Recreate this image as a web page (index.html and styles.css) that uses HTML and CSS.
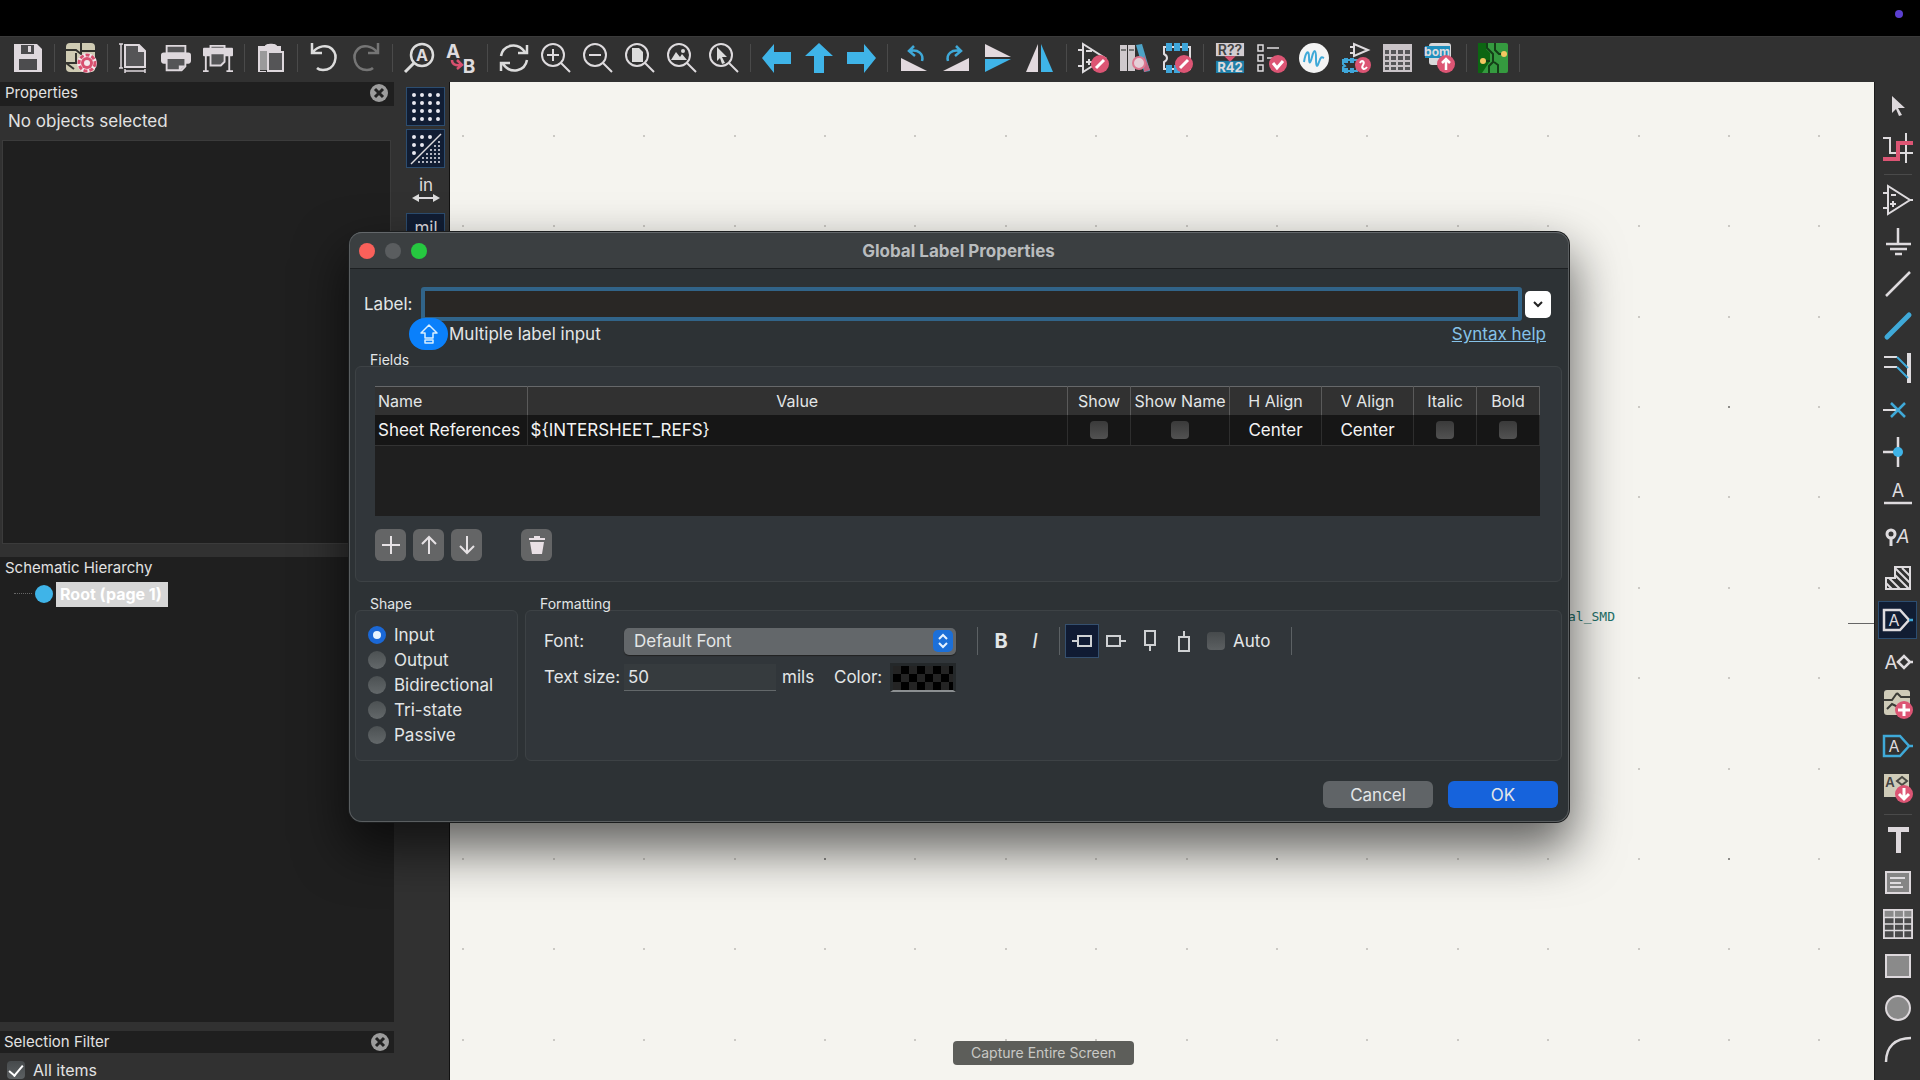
FILE: index.html
```html
<!DOCTYPE html>
<html lang="en">
<head>
    <meta charset="UTF-8">
    <meta name="viewport" content="width=device-width, initial-scale=1.0">
    <title>Global Label Properties</title>
    <link rel="stylesheet" href="styles.css">
</head>
<body>

<div class="menubar"><span class="mic-dot"></span></div>

<div class="toolbar">
    <button type="button" title="Save"><svg viewBox="0 0 30 30"><path fill="#ded8dd" d="M1 1h23l5 5v23H1z"/><path fill="#4c4c4e" d="M8 2h13v9H8zM6 16h18v11H6z"/><path fill="#ded8dd" d="M15 3h3v6h-3z"/></svg></button>
    <span class="sep"></span>
    <button type="button" title="Schematic Setup"><svg viewBox="0 0 30 30"><rect width="29" height="29" rx="4" fill="#cfcbb3"/><path d="M0 7h10l5 4V0M15 8h14M0 20h10V10M0 20l8 6" fill="none" stroke="#34342f" stroke-width="2"/><circle cx="21" cy="20" r="10" fill="#f3e8ec"/><circle cx="21" cy="20" r="8" fill="none" stroke="#d8506f" stroke-width="3" stroke-dasharray="4 2"/><circle cx="21" cy="20" r="6" fill="#d8506f"/><circle cx="21" cy="20" r="3" fill="#f3e8ec"/></svg></button>
    <span class="sep"></span>
    <button type="button" title="Page Settings"><svg viewBox="0 0 30 30"><path fill="#555557" stroke="#ded8dd" stroke-width="2" d="M6 2h14l6 6v16H6z"/><path fill="#ded8dd" d="M19 1l8 8h-8z"/><path stroke="#ded8dd" stroke-width="1.5" fill="none" d="M0 1h4M2 1v24M0 25h4M6 28h20M6 26v4M26 26v4"/></svg></button>
    <button type="button" title="Print"><svg viewBox="0 0 32 30"><path fill="#555557" stroke="#ded8dd" stroke-width="2" d="M6 2h20v8H6z"/><rect y="9" width="32" height="12" rx="3" fill="#ded8dd"/><path fill="#555557" stroke="#ded8dd" stroke-width="2" d="M6 15h20v9l-4 4H6z"/><path fill="#ded8dd" d="M19 29v-6h7z"/></svg></button>
    <button type="button" title="Plot"><svg viewBox="0 0 32 30"><path fill="#555557" stroke="#ded8dd" stroke-width="2" d="M8 2h15v5H8z"/><rect y="4" width="32" height="9" rx="1" fill="#ded8dd"/><path fill="#555557" stroke="#ded8dd" stroke-width="2" d="M8 10h15v9l-4 4H8z"/><path fill="none" stroke="#ded8dd" stroke-width="2" d="M3 12v16M28 12v16M0 29h6M25 29h7"/></svg></button>
    <span class="sep"></span>
    <button type="button" title="Paste"><svg viewBox="0 0 30 30"><path fill="#9a9a9b" d="M4 4h21v23H4z"/><path fill="#ded8dd" d="M2 3h7c0-3 12-3 12 0h4v5H2zM2 8h2v20h6v1H2z"/><path fill="#555557" stroke="#ded8dd" stroke-width="2" d="M12 9h15v19H12z"/></svg></button>
    <span class="sep"></span>
    <button type="button" title="Undo"><svg viewBox="0 0 30 30"><path fill="none" stroke="#dcdcdc" stroke-width="2.5" d="M4 9C9 3 18 1 23 6c7 7 3 21-9 21-2 0-4 0-6-2M3 0v10h10"/></svg></button>
    <button type="button" title="Redo"><svg viewBox="0 0 30 30"><path fill="none" stroke="#757575" stroke-width="2.5" d="M26 9C21 3 12 1 7 6c-7 7-3 21 9 21 2 0 4 0 6-2M27 0v10H17"/></svg></button>
    <span class="sep"></span>
    <button type="button" title="Find"><svg viewBox="0 0 30 30"><circle cx="18" cy="12" r="11" fill="none" stroke="#dcdcdc" stroke-width="2.5"/><path stroke="#dcdcdc" stroke-width="3" d="M10 20l-9 9"/><text x="18" y="18" class="glyph bold" font-size="16">A</text></svg></button>
    <button type="button" title="Find and Replace"><svg viewBox="0 0 30 30"><text x="7" y="15" class="glyph bold" font-size="19">A</text><text x="23" y="30" class="glyph bold" font-size="19">B</text><path fill="none" stroke="#d8506f" stroke-width="2.5" d="M6 17c0 4 3 6 9 5M11 17l5 5-5 4"/></svg></button>
    <span class="sep"></span>
    <button type="button" title="Refresh"><svg viewBox="0 0 30 30"><path fill="none" stroke="#dcdcdc" stroke-width="2.5" d="M2 13C4 2 18-2 26 9M28 2v8h-9M28 17C26 28 12 32 4 21M2 28v-8h9"/></svg></button>
    <button type="button" title="Zoom In"><svg viewBox="0 0 30 30"><circle cx="12" cy="12" r="11" class="lens"/><path class="lens" d="M20 20l9 9M12 6v12M6 12h12"/></svg></button>
    <button type="button" title="Zoom Out"><svg viewBox="0 0 30 30"><circle cx="12" cy="12" r="11" class="lens"/><path class="lens" d="M20 20l9 9M6 12h12"/></svg></button>
    <button type="button" title="Zoom to Fit"><svg viewBox="0 0 30 30"><circle cx="12" cy="12" r="11" class="lens"/><path class="lens" d="M20 20l9 9"/><path fill="#dcdcdc" d="M7 5h7l4 4v10H7z"/></svg></button>
    <button type="button" title="Zoom to Objects"><svg viewBox="0 0 30 30"><circle cx="12" cy="12" r="11" class="lens"/><path class="lens" d="M20 20l9 9"/><path fill="#dcdcdc" d="M4 17l5-8 4 5 2-3 5 6z"/><circle cx="16" cy="8" r="2" fill="#dcdcdc"/></svg></button>
    <button type="button" title="Zoom to Selection"><svg viewBox="0 0 30 30"><circle cx="12" cy="12" r="11" class="lens"/><path class="lens" d="M20 20l9 9"/><path fill="#dcdcdc" d="M8 4l10 10h-5l3 6-3 1-2-6-3 3z"/></svg></button>
    <span class="sep"></span>
    <button type="button" title="Back"><svg viewBox="0 0 30 30"><path fill="#3fb4e8" d="M0 15L12 1v8h17v12H12v9z"/></svg></button>
    <button type="button" title="Up"><svg viewBox="0 0 30 30"><path fill="#3fb4e8" d="M15 0l14 13h-9v17H10V13H1z"/></svg></button>
    <button type="button" title="Forward"><svg viewBox="0 0 30 30"><path fill="#3fb4e8" d="M30 15L18 1v8H1v12h17v9z"/></svg></button>
    <span class="sep"></span>
    <button type="button" title="Rotate Left"><svg viewBox="0 0 30 30"><path fill="#e2d9de" d="M2 15v13h26z"/><path class="cyan" stroke-width="2.5" d="M23 18c2-7-4-12-12-10M15 3l-5 5 6 5"/></svg></button>
    <button type="button" title="Rotate Right"><svg viewBox="0 0 30 30"><path fill="#e2d9de" d="M28 15v13H2z"/><path class="cyan" stroke-width="2.5" d="M7 18C5 11 11 6 19 8M15 3l5 5-6 5"/></svg></button>
    <button type="button" title="Mirror Vertically"><svg viewBox="0 0 30 30"><path fill="#e2d9de" d="M2 1v13h26z"/><path fill="#3fb4e8" d="M2 29V16h26z"/></svg></button>
    <button type="button" title="Mirror Horizontally"><svg viewBox="0 0 30 30"><path fill="#e2d9de" d="M1 29h12V1z"/><path fill="#3fb4e8" d="M28 29H16V1z"/></svg></button>
    <span class="sep"></span>
    <button type="button" title="Symbol Editor"><svg viewBox="0 0 30 30"><path class="line" d="M5 1v28l22-14zM0 7h5M0 23h5M8 8h6M11 16v6M8 19h6"/><circle cx="22" cy="21" r="9" fill="#dc5574"/><path stroke="#fff" stroke-width="3" d="M18 25l8-8"/></svg></button>
    <button type="button" title="Symbol Library Browser"><svg viewBox="0 0 30 30"><path fill="#cfc9cd" d="M0 2h7v26H0zM8 2h7v26H8z"/><path fill="#777" d="M1 6h5v2H1zM9 6h5v2H9z"/><path fill="#4da3c7" d="M16 2l6-1 8 27-6 1z"/><path fill="#c86483" d="M24 12l6 15-6 2z"/><circle cx="19" cy="20" r="6" fill="#e6cfd8" stroke="#dc7890" stroke-width="2"/></svg></button>
    <button type="button" title="Footprint Editor"><svg viewBox="0 0 30 30"><path class="line" d="M2 4h26v22H2v-7c4-2 4-6 0-8z"/><path fill="#3fa6da" d="M4 0h6v8H4zM12 0h6v8h-6zM20 0h6v8h-6zM4 22h6v8H4zM12 22h6v8h-6z"/><circle cx="22" cy="21" r="9" fill="#dc5574"/><path stroke="#fff" stroke-width="3" d="M18 25l8-8"/></svg></button>
    <span class="sep"></span>
    <button type="button" title="Annotate"><svg viewBox="0 0 30 32"><path fill="#d2ccd0" d="M0 0h30v14H0z"/><path fill="#1f7fa8" d="M0 19h30v13H0z"/><path fill="#dc5574" d="M9 14h12l-6 6z"/><text x="15" y="13" class="glyph dark" font-size="15">R??</text><text x="15" y="31" class="glyph bold" font-size="14">R42</text></svg></button>
    <button type="button" title="Electrical Rules Checker"><svg viewBox="0 0 30 30"><path class="line" stroke-width="1.5" d="M1 2h5v6H1zM1 12h5v6H1zM1 22h5v6H1zM10 5h12M10 15h6"/><circle cx="21" cy="21" r="9" fill="#dc5574"/><path fill="none" stroke="#fff" stroke-width="3" d="M16 20l4 5 6-7"/></svg></button>
    <button type="button" title="Simulator"><svg viewBox="0 0 30 30"><circle cx="15" cy="15" r="15" fill="#f4f4f4"/><path class="cyan" d="M5 19c2-12 5-12 5-5s1 8 3 0 4-8 4 1 1 10 3 4 3-5 5-4"/></svg></button>
    <button type="button" title="Assign Footprints"><svg viewBox="0 0 30 30"><path class="line" d="M13 1v12l14-6zM9 4h4M9 10h4"/><path class="cyan" d="M2 17h14v11H2v-4l2-1-2-2z"/><path fill="#3fa6da" d="M3 15h4v5H3zM9 15h4v5H9zM3 25h4v5H3zM9 25h4v5H9z"/><circle cx="22" cy="22" r="8" fill="#dc5574"/><path fill="none" stroke="#fff" stroke-width="2" d="M19 20c2-4 5-1 3 2s1 6 4 2"/></svg></button>
    <button type="button" title="Edit Symbol Fields"><svg viewBox="0 0 30 30"><path fill="#c9c3c7" d="M0 1h29v28H0z"/><path fill="#555557" d="M2 7h4v4H2zM8 7h5v4H8zM15 7h5v4h-5zM22 7h5v4h-5zM2 13h4v4H2zM8 13h5v4H8zM15 13h5v4h-5zM22 13h5v4h-5zM2 19h4v3H2zM8 19h5v3H8zM15 19h5v3h-5zM22 19h5v3h-5zM2 24h4v3H2zM8 24h5v3H8zM15 24h5v3h-5zM22 24h5v3h-5z"/></svg></button>
    <button type="button" title="Bill of Materials"><svg viewBox="0 0 30 30"><rect x="4" width="22" height="22" rx="3" fill="#d8d8da"/><path fill="#1f8fbe" d="M0 3h25v12H0z"/><text x="12" y="13" class="glyph bold" font-size="12">bom</text><circle cx="21" cy="21" r="9" fill="#dc5574"/><path fill="none" stroke="#fff" stroke-width="2.5" d="M21 27V16M17 20l4-4 4 4"/></svg></button>
    <span class="sep"></span>
    <button type="button" title="PCB Editor"><svg viewBox="0 0 30 30"><rect width="30" height="30" rx="2" fill="#359a3f"/><path fill="#0c6612" d="M0 0h8v6l4 4v8l-8 12H0z"/><path fill="none" stroke="#143f17" stroke-width="2" d="M9 0v5l6 6v8l-4 4v7M17 0v7l4 4h6M20 30v-8l-4-3M5 18h7"/><circle cx="5" cy="18" r="3" fill="#f5c761"/><circle cx="26" cy="11" r="3" fill="#f5c761"/></svg></button>
    <span class="sep"></span>
</div>

<div class="workspace">
    <aside class="panels">
        <div class="panel-header">Properties
            <button type="button" class="close" title="Close"><svg viewBox="0 0 18 18"><circle cx="9" cy="9" r="9" fill="#9c9c9c"/><path stroke="#222" stroke-width="3" d="M5 5l8 8M13 5l-8 8"/></svg></button>
        </div>
        <p class="status">No objects selected</p>
        <div class="property-grid"></div>
        <div class="panel-header">Schematic Hierarchy</div>
        <div class="tree">
            <span class="branch"></span><span class="node"></span><span class="node-name">Root (page 1)</span>
        </div>
        <div class="panel-header small">Selection Filter
            <button type="button" class="close" title="Close"><svg viewBox="0 0 18 18"><circle cx="9" cy="9" r="9" fill="#9c9c9c"/><path stroke="#222" stroke-width="3" d="M5 5l8 8M13 5l-8 8"/></svg></button>
        </div>
        <label class="filter"><input type="checkbox" class="check" checked>All items</label>
    </aside>

    <div class="left-tools">
        <button type="button" class="active" title="Show Grid"><svg viewBox="0 0 30 30"><path class="dots" d="M3 3h0M11 3h0M19 3h0M27 3h0M3 11h0M11 11h0M19 11h0M27 11h0M3 19h0M11 19h0M19 19h0M27 19h0M3 27h0M11 27h0M19 27h0M27 27h0"/></svg></button>
        <button type="button" class="active" title="Grid Overrides"><svg viewBox="0 0 30 30"><path class="dots" d="M3 3h0M11 3h0M19 3h0M3 11h0M11 11h0M3 19h0"/><path class="line" stroke-width="1.5" d="M0 30L30 0"/><path class="dots fine" d="M28 8h0M24 12h0M28 12h0M20 16h0M24 16h0M28 16h0M16 20h0M20 20h0M24 20h0M28 20h0M12 24h0M16 24h0M20 24h0M24 24h0M28 24h0M8 28h0M12 28h0M16 28h0M20 28h0M24 28h0M28 28h0"/></svg></button>
        <button type="button" title="Inches"><svg viewBox="0 0 30 30"><text x="15" y="15" class="glyph" font-size="17">in</text><path class="line" d="M5 22h20"/><path fill="#dcdcdc" d="M1 22l7-4v8zM29 22l-7-4v8z"/></svg></button>
        <button type="button" class="active" title="Mils"><svg viewBox="0 0 30 30"><text x="15" y="16" class="glyph" font-size="17">mil</text><path class="line" d="M5 22h20"/></svg></button>
    </div>

    <main class="canvas">
        <svg class="sheet" width="100%" height="100%">
            <defs>
                <pattern id="grid" x="374" y="324" width="452" height="452" patternUnits="userSpaceOnUse">
                    <g fill="none" stroke="#cbc9c4" stroke-width="2" stroke-dasharray="2 88 2 89 2 88 2 89 2 88">
                        <path d="M0 1h452M0 91h452M0 182h452M0 272h452M0 363h452"/>
                    </g>
                    <path fill="#8d8c89" d="M0 0h2v2H0z"/>
                </pattern>
            </defs>
            <rect width="100%" height="100%" fill="url(#grid)"/>
        </svg>
        <span class="footprint-text">al_SMD</span>
        <span class="wire"></span>
    </main>

    <div class="right-tools">
        <button type="button" title="Select"><svg viewBox="0 0 30 30"><path fill="#ddd8dc" d="M9 5l13 12h-7l4 7-3 1-3-7-4 4z"/></svg></button>
        <button type="button" title="Highlight Net"><svg viewBox="0 0 30 30"><path class="line" d="M0 5h7v15h23M23 0v30"/><path fill="none" stroke="#dc5574" stroke-width="4" d="M0 26h15V10h15"/></svg></button>
        <span class="sep"></span>
        <button type="button" title="Place Symbol"><svg viewBox="0 0 30 30"><path class="line" d="M5 1v28l22-14zM0 8h5M0 23h5M26 15h4M8 10h5M10 16v6M7 19h6"/></svg></button>
        <button type="button" title="Place Power"><svg viewBox="0 0 30 30"><path class="line" stroke-width="2.5" d="M15 1v16M3 17h25M7 22h17M12 27h7"/></svg></button>
        <button type="button" title="Draw Wire"><svg viewBox="0 0 30 30"><path class="line" stroke-width="2.5" d="M3 27L27 3"/></svg></button>
        <button type="button" title="Draw Bus"><svg viewBox="0 0 30 30"><path class="cyan" stroke-width="5" stroke-linecap="round" d="M4 26L26 4"/></svg></button>
        <button type="button" title="Wire to Bus Entry"><svg viewBox="0 0 30 30"><path class="line" stroke-width="4" d="M26 0v30"/><path class="line" d="M1 4h13M1 14h13"/><path class="cyan" d="M14 4l11 11M14 14l11 11"/></svg></button>
        <button type="button" title="No Connect"><svg viewBox="0 0 30 30"><path class="line" d="M0 15h14"/><path class="cyan" stroke-width="2.5" d="M8 8l14 14M22 8L8 22"/></svg></button>
        <button type="button" title="Junction"><svg viewBox="0 0 30 30"><path class="line" stroke-width="2.5" d="M0 15h15M15 0v30"/><circle cx="15" cy="15" r="5" fill="#3fb4e8"/></svg></button>
        <button type="button" title="Net Label"><svg viewBox="0 0 30 30"><text x="15" y="18" class="glyph" font-size="18">A</text><path class="line" stroke-width="2.5" d="M1 24h28"/></svg></button>
        <button type="button" title="Directive Label"><svg viewBox="0 0 30 30"><circle cx="8" cy="13" r="4" class="line" stroke-width="3"/><path class="line" stroke-width="3" d="M8 17v8"/><text x="20" y="22" class="glyph slant" font-size="19">A</text></svg></button>
        <button type="button" title="Rule Area"><svg viewBox="0 0 30 30"><path class="line" d="M12 4h15v22H3V15h9z"/><path class="line" d="M12 5l15 15M19 5l8 8M12 12l14 14M6 15l11 11M3 20l6 6"/></svg></button>
        <button type="button" class="active" title="Global Label"><svg viewBox="0 0 30 30"><path class="line" stroke-width="2.5" d="M1 5h16l9 10-9 10H1z"/><text x="11" y="21" class="glyph" font-size="16">A</text><path class="cyan" stroke-width="2.5" d="M26 15h4"/></svg></button>
        <button type="button" title="Hierarchical Label"><svg viewBox="0 0 30 30"><text x="8" y="22" class="glyph" font-size="19">A</text><path class="line" stroke-width="2.5" d="M15 15l6-6 6 6-6 6zM27 15h3"/></svg></button>
        <button type="button" title="Draw Sheet"><svg viewBox="0 0 30 30"><rect x="1" y="1" width="26" height="25" rx="3" fill="#cfcbb8"/><path fill="none" stroke="#3b3b36" stroke-width="2" d="M1 11h8l5-7M14 4l4 4h9M4 20l5-5 6 3"/><circle cx="21" cy="21" r="9" fill="#dc5574"/><path stroke="#fff" stroke-width="3" d="M15 21h12M21 15v12"/></svg></button>
        <button type="button" title="Sheet Pin"><svg viewBox="0 0 30 30"><path class="cyan" stroke-width="2.5" d="M1 5h16l9 10-9 10H1zM26 15h4"/><text x="11" y="21" class="glyph" font-size="16">A</text></svg></button>
        <button type="button" title="Import Sheet"><svg viewBox="0 0 30 30"><path fill="#cfcbb8" d="M1 1h25v23H1z"/><text x="7" y="14" class="glyph dark" font-size="13">A</text><path fill="none" stroke="#4a4a44" stroke-width="2" d="M14 8l5-4 5 4-5 4z"/><circle cx="21" cy="21" r="9" fill="#dc5574"/><path fill="none" stroke="#fff" stroke-width="3" d="M21 15v11M16 21l5 5 5-5"/></svg></button>
        <span class="sep"></span>
        <button type="button" title="Text"><svg viewBox="0 0 30 30"><path fill="#ddd8dc" d="M5 2h21v5h-8v21h-5V7H5z"/></svg></button>
        <button type="button" title="Text Box"><svg viewBox="0 0 30 30"><path fill="#858585" stroke="#ddd8dc" stroke-width="2" d="M3 5h24v21H3z"/><path class="line" d="M7 11h15M7 16h11M7 20h13"/></svg></button>
        <button type="button" title="Table"><svg viewBox="0 0 32 32"><path fill="#4a4a4b" stroke="#ddd8dc" stroke-width="2" d="M1 1h30v30H1z"/><path fill="#8a8a8a" d="M2 2h28v7H2z"/><path class="line" stroke-width="1.5" d="M1 9h30M1 16h30M1 23h30M12 1v30M22 1v30"/></svg></button>
        <button type="button" title="Rectangle"><svg viewBox="0 0 30 30"><path fill="#8a8a8a" stroke="#ddd8dc" stroke-width="2" d="M3 4h24v22H3z"/></svg></button>
        <button type="button" title="Circle"><svg viewBox="0 0 30 30"><circle cx="15" cy="15" r="12" fill="#8a8a8a" stroke="#ddd8dc" stroke-width="2"/></svg></button>
        <button type="button" title="Arc"><svg viewBox="0 0 30 30"><path class="line" stroke-width="2.5" d="M3 27C3 12 12 3 28 3"/></svg></button>
    </div>
</div>

<form class="dialog">
    <header class="titlebar">
        <span class="light red"></span><span class="light grey"></span><span class="light green"></span>
        <h1>Global Label Properties</h1>
    </header>

    <div class="label-row">
        <label for="label">Label:</label>
        <input type="text" id="label" name="label">
        <button type="button" class="drop" title="Choose label"><svg viewBox="0 0 12 12"><path fill="none" stroke="#222" stroke-width="2" d="M2 4l4 4 4-4"/></svg></button>
    </div>
    <div class="hint-row">
        <span class="caps"><svg viewBox="0 0 20 20"><path fill="none" stroke="#d9efff" stroke-width="1.5" stroke-linejoin="round" d="M10 1l8 8h-4v5H6V9H2zM6 16h8v3H6z"/></svg></span>
        <span>Multiple label input</span>
        <a href="#">Syntax help</a>
    </div>

    <fieldset>
        <legend>Fields</legend>
        <div class="box fields">
            <div class="table-area">
                <table>
                    <colgroup><col class="c-name"><col><col class="c-check"><col class="c-show-name"><col class="c-align"><col class="c-align"><col class="c-check"><col class="c-check"></colgroup>
                    <thead>
                        <tr><th class="left">Name</th><th>Value</th><th>Show</th><th>Show Name</th><th>H Align</th><th>V Align</th><th>Italic</th><th>Bold</th></tr>
                    </thead>
                    <tbody>
                        <tr>
                            <td class="left">Sheet References</td>
                            <td class="left">${INTERSHEET_REFS}</td>
                            <td><input type="checkbox" class="check" aria-label="Show"></td>
                            <td><input type="checkbox" class="check" aria-label="Show Name"></td>
                            <td>Center</td>
                            <td>Center</td>
                            <td><input type="checkbox" class="check" aria-label="Italic"></td>
                            <td><input type="checkbox" class="check" aria-label="Bold"></td>
                        </tr>
                    </tbody>
                </table>
            </div>
            <div class="row-buttons">
                <button type="button" title="Add field"><svg viewBox="0 0 20 20"><path d="M10 1v18M1 10h18"/></svg></button>
                <button type="button" title="Move up"><svg viewBox="0 0 20 20"><path d="M10 19V2M3 9l7-7 7 7"/></svg></button>
                <button type="button" title="Move down"><svg viewBox="0 0 20 20"><path d="M10 1v17M3 11l7 7 7-7"/></svg></button>
                <button type="button" class="delete" title="Delete field"><svg viewBox="0 0 20 20"><path class="solid" d="M2 3h5V1h6v2h5v2H2zM3 7h14l-2 12H5z"/></svg></button>
            </div>
        </div>
    </fieldset>

    <div class="groups">
        <fieldset class="shape">
            <legend>Shape</legend>
            <div class="box">
                <label><input type="radio" name="shape" checked>Input</label>
                <label><input type="radio" name="shape">Output</label>
                <label><input type="radio" name="shape">Bidirectional</label>
                <label><input type="radio" name="shape">Tri-state</label>
                <label><input type="radio" name="shape">Passive</label>
            </div>
        </fieldset>
        <fieldset class="formatting">
            <legend>Formatting</legend>
            <div class="box">
                <div class="format-row">
                    <label class="caption" for="font">Font:</label>
                    <div class="select">
                        <select id="font"><option>Default Font</option></select>
                        <svg viewBox="0 0 20 22"><rect width="20" height="22" rx="5" fill="#1b6fd8"/><path fill="none" stroke="#e6f2ff" stroke-width="2" d="M6 9l4-4 4 4M6 13l4 4 4-4"/></svg>
                    </div>
                    <span class="divider"></span>
                    <button type="button" class="tool" title="Bold"><b>B</b></button>
                    <button type="button" class="tool" title="Italic"><i>I</i></button>
                    <span class="divider tight"></span>
                    <button type="button" class="tool active" title="Spin right"><svg viewBox="0 0 20 20"><path d="M0 10h6M6 5h13v10H6z"/></svg></button>
                    <button type="button" class="tool" title="Spin left"><svg viewBox="0 0 20 20"><path d="M14 10h6M1 5h13v10H1z"/></svg></button>
                    <button type="button" class="tool" title="Spin up"><svg viewBox="0 0 20 20"><path d="M10 14v6M5 0h10v14H5z"/></svg></button>
                    <button type="button" class="tool" title="Spin down"><svg viewBox="0 0 20 20"><path d="M10 0v6M5 6h10v14H5z"/></svg></button>
                    <label class="auto"><input type="checkbox" class="check">Auto</label>
                    <span class="divider"></span>
                </div>
                <div class="format-row">
                    <label class="caption" for="size">Text size:</label>
                    <input type="text" id="size" value="50">
                    <span class="unit">mils</span>
                    <label for="color">Color:</label>
                    <button type="button" id="color" class="swatch"></button>
                </div>
            </div>
        </fieldset>
    </div>

    <footer>
        <button type="button" class="push">Cancel</button>
        <button type="submit" class="push primary">OK</button>
    </footer>
</form>

<div class="capture-tip">Capture Entire Screen</div>

</body>
</html>
```

FILE: styles.css
```css
* {
    box-sizing: border-box;
}
body {
    margin: 0;
    height: 100vh;
    overflow: hidden;
    display: flex;
    flex-direction: column;
    position: relative;
    background: #313131;
    color: #e2e2e2;
    font-family: Inter, Roboto, "Liberation Sans", sans-serif;
    font-size: 16px;
    line-height: 20px;
}
button, input, select {
    font: inherit;
    color: inherit;
    margin: 0;
    padding: 0;
    border: 0;
    background: none;
}
svg {
    display: block;
    overflow: visible;
    stroke-width: 2px;
}
.menubar {
    flex: none;
    height: 36px;
    padding: 10px 17px;
    background: #000;
    display: flex;
    justify-content: flex-end;
}
.mic-dot {
    width: 8px;
    height: 8px;
    border-radius: 50%;
    background: #5b3fd0;
}

/* toolbars */
.toolbar {
    flex: none;
    height: 46px;
    padding: 0 7px 3px;
    display: flex;
    align-items: center;
    border-top: 1px solid #3a3a3a;
}
.toolbar button, .right-tools button, .left-tools button {
    flex: none;
    display: flex;
    align-items: center;
    justify-content: center;
}
.toolbar button {
    width: 42px;
    height: 42px;
}
.toolbar svg, .right-tools svg {
    width: 30px;
    height: 30px;
}
.toolbar .sep {
    flex: none;
    width: 1px;
    height: 28px;
    margin: 0 5px;
    background: #4a4a4a;
}
.glyph {
    fill: #dedbde;
    text-anchor: middle;
    font-family: Inter, "Liberation Sans", sans-serif;
}
.bold {
    font-weight: 700;
}
.slant {
    font-style: italic;
}
.dark {
    fill: #444;
    font-weight: 600;
}
.line, .lens {
    fill: none;
    stroke: #dedbde;
}
.cyan {
    fill: none;
    stroke: #3fa9d8;
}
.dots {
    fill: none;
    stroke: #e8e8f0;
    stroke-width: 4px;
    stroke-linecap: round;
}
.fine {
    stroke-width: 2px;
}

/* main area */
.workspace {
    flex: 1;
    min-height: 0;
    display: flex;
}
.panels {
    flex: none;
    width: 394px;
    display: flex;
    flex-direction: column;
}
.panel-header {
    flex: none;
    height: 24px;
    padding: 0 6px 2px 5px;
    display: flex;
    align-items: center;
    justify-content: space-between;
    background: #1f1f1f;
    font-size: 15px;
}
.panel-header.small {
    height: 22px;
    padding: 0 5px 0 4px;
}
.close svg {
    width: 18px;
    height: 18px;
}
.status {
    margin: 0;
    padding: 5px 8px 9px;
    font-size: 17px;
}
.property-grid {
    flex: 403;
    margin: 0 3px 13px 2px;
    border: 1px solid #3b3b3b;
    background: #1f1f1f;
}
.tree {
    flex: 441;
    padding: 1px 14px;
    margin-bottom: 9px;
    background: #1f1f1f;
    display: flex;
    align-items: flex-start;
}
.branch {
    width: 18px;
    height: 12px;
    margin-right: 3px;
    border-bottom: 1px dotted #666;
}
.node {
    width: 18px;
    height: 18px;
    margin: 3px 3px 0 0;
    border-radius: 50%;
    background: #3fb4e8;
}
.node-name {
    padding: 2px 6px 3px 4px;
    background: #d6d6d6;
    color: #fff;
    font-weight: 700;
}
.filter {
    flex: none;
    height: 27px;
    padding: 7px 7px 0;
    display: flex;
    align-items: center;
    gap: 8px;
}
.check {
    appearance: none;
    flex: none;
    width: 18px;
    height: 18px;
    border-radius: 4px;
    background: linear-gradient(#464a4c, #5c6062);
    display: grid;
    place-items: center;
}
.check:checked::before {
    content: "";
    width: 6px;
    height: 12px;
    margin-bottom: 3px;
    border: solid #fff;
    border-width: 0 2px 2px 0;
    transform: rotate(40deg);
}
.left-tools {
    flex: none;
    width: 56px;
    padding: 5px 5px 0 12px;
    border-right: 1px solid #111;
    overflow: hidden;
}
.left-tools button {
    width: 39px;
    height: 39px;
    margin-bottom: 3px;
    border: 1px solid transparent;
}
.left-tools svg {
    width: 30px;
    height: 30px;
}
.left-tools .active, .right-tools .active {
    background: #111d33;
    border: 1px solid #2c4d70;
}
.canvas {
    flex: 1;
    position: relative;
    overflow: hidden;
    background: #f5f4ef;
}
.footprint-text {
    position: absolute;
    right: 259px;
    top: 525px;
    color: #1d7069;
    font-family: "DejaVu Sans Mono", monospace;
    font-size: 13px;
}
.wire {
    position: absolute;
    right: 0;
    top: 541px;
    width: 26px;
    height: 1px;
    background: #666;
}
.right-tools {
    flex: none;
    width: 46px;
    padding-top: 3px;
    border-left: 1px solid #1c1c1c;
    overflow: hidden;
    display: flex;
    flex-direction: column;
    align-items: center;
}
.right-tools button {
    width: 39px;
    height: 38px;
    margin: 2px 0;
}
.right-tools .sep {
    flex: none;
    width: 28px;
    height: 1px;
    margin: 5px 0 4px;
    background: #4a4a4a;
}

/* dialog */
.dialog {
    position: absolute;
    top: 232px;
    left: 349px;
    right: 351px;
    background: #2d3235;
    border-radius: 13px;
    box-shadow: 0 0 0 1px #1b1d1e, inset 0 0 0 1px #5a5e60, 0 24px 50px 4px rgba(0, 0, 0, 0.6);
    color: #e3e6e7;
    font-size: 17px;
}
.titlebar {
    height: 37px;
    margin: 0 1px;
    padding: 0 9px;
    display: flex;
    align-items: center;
    gap: 10px;
    background: #3b3f41;
    border-top: 1px solid #63676a;
    border-bottom: 1px solid #1d2022;
    border-radius: 12px 12px 0 0;
}
.light {
    width: 16px;
    height: 16px;
    border-radius: 50%;
}
.red {
    background: #f9605a;
}
.grey {
    background: #5a5d5f;
}
.green {
    background: #26c840;
}
.titlebar h1 {
    flex: 1;
    margin: 0 79px 0 0;
    text-align: center;
    color: #b9bcbe;
    font-size: 17px;
    font-weight: 700;
}
.label-row {
    display: flex;
    align-items: center;
    padding: 18px 18px 0 15px;
}
.label-row label {
    width: 57px;
}
.label-row input {
    flex: 1;
    min-width: 0;
    height: 34px;
    padding: 0 6px;
    background: #292725;
    border: 4px solid #316489;
    border-radius: 3px;
    outline: none;
}
.drop {
    width: 26px;
    height: 27px;
    margin-left: 3px;
    border-radius: 5px;
    background: #fff;
    display: grid;
    place-items: center;
}
.drop svg {
    width: 12px;
    height: 12px;
}
.hint-row {
    height: 26px;
    padding: 0 23px 0 60px;
    display: flex;
    align-items: center;
}
.caps {
    flex: none;
    width: 39px;
    height: 32px;
    margin-right: 1px;
    border-radius: 16px;
    background: #0a80fb;
    display: grid;
    place-items: center;
}
.caps svg {
    width: 20px;
    height: 20px;
}
.hint-row a {
    margin-left: auto;
    color: #86c2e8;
}
fieldset {
    margin: 0;
    padding: 0;
    border: 0;
    min-width: 0;
}
legend {
    padding: 0 15px;
    font-size: 14px;
    line-height: 12px;
}
.box {
    border: 1px solid #3d4245;
    border-radius: 6px;
    background: #31363a;
}
.dialog > fieldset {
    margin: 7px 7px 0 6px;
}
.fields {
    padding: 19px 21px 20px 19px;
}
.table-area {
    height: 130px;
    background: #1f1f1f;
}
table {
    width: 100%;
    table-layout: fixed;
    border-collapse: collapse;
}
.c-name {
    width: 152px;
}
.c-check {
    width: 63px;
}
.c-show-name {
    width: 99px;
}
.c-align {
    width: 92px;
}
th, td {
    padding: 0;
    text-align: center;
    white-space: nowrap;
}
th {
    height: 28px;
    background: #313131;
    border-top: 1px solid #66686a;
    border-right: 1px solid #5a5a5a;
    font-size: 16px;
    font-weight: 400;
}
td {
    height: 31px;
    background: #161616;
    border-right: 1px solid #2e2e2e;
    border-bottom: 1px solid #333;
    color: #f4f4f4;
}
.left {
    padding-left: 3px;
    text-align: left;
}
th:nth-child(2) {
    text-align: center;
}
td .check {
    margin: 0 auto;
    background: linear-gradient(#3a3a3a, #525252);
}
.row-buttons {
    display: flex;
    gap: 7px;
    margin-top: 13px;
}
.row-buttons button {
    width: 31px;
    height: 32px;
    border-radius: 6px;
    background: #646566;
    display: grid;
    place-items: center;
}
.row-buttons svg {
    width: 20px;
    height: 20px;
    fill: none;
    stroke: #e6e2e5;
}
.row-buttons .solid {
    fill: #e9e0e5;
    stroke: none;
}
.row-buttons .delete {
    margin-left: 32px;
}
.groups {
    display: flex;
    gap: 7px;
    margin: 16px 7px 0 6px;
}
.groups .box {
    height: 151px;
}
.shape {
    width: 163px;
}
.shape .box {
    padding: 11px 12px;
}
.shape label {
    display: flex;
    align-items: center;
    gap: 8px;
    height: 25px;
}
input[type="radio"] {
    appearance: none;
    flex: none;
    width: 18px;
    height: 18px;
    border-radius: 50%;
    background: linear-gradient(#4c5153, #63686a);
}
input[type="radio"]:checked {
    background: #e8f4ff;
    border: 5px solid #1b68d6;
}
.formatting {
    flex: 1;
}
.formatting .box {
    padding: 12px 18px;
}
.format-row {
    display: flex;
    align-items: center;
    height: 36px;
}
.caption {
    width: 80px;
}
.select {
    position: relative;
    width: 332px;
}
.select select {
    appearance: none;
    width: 100%;
    height: 27px;
    padding: 0 10px;
    border-radius: 5px;
    background: #63676a;
    box-shadow: 0 1px 1px #222;
}
.select svg {
    position: absolute;
    right: 3px;
    top: 2px;
    width: 20px;
    height: 22px;
    pointer-events: none;
}
.divider {
    flex: none;
    width: 1px;
    height: 28px;
    margin: 0 6px 0 21px;
    background: #5c6164;
}
.divider.tight {
    margin: 0 5px 0 7px;
}
.tool {
    flex: none;
    width: 34px;
    height: 34px;
    border: 1px solid transparent;
    display: grid;
    place-items: center;
    font-size: 20px;
}
.tool svg {
    width: 20px;
    height: 20px;
    fill: none;
    stroke: #cfd1d3;
}
.tool.active {
    background: #101b33;
    border-color: #35506f;
}
.auto {
    display: flex;
    align-items: center;
    gap: 8px;
    margin-left: 6px;
}
#size {
    width: 152px;
    height: 27px;
    padding: 0 4px;
    background: #363b3e;
    border-bottom: 1px solid #63686a;
}
.unit {
    width: 52px;
    margin-left: 6px;
}
.swatch {
    width: 66px;
    height: 29px;
    margin-left: 8px;
    border: 3px solid #24282a;
    border-bottom: 2px solid #8b8f91;
    background: repeating-conic-gradient(#000 0 25%, #242424 0 50%) 0 0 / 16px 16px;
}
footer {
    display: flex;
    justify-content: flex-end;
    gap: 15px;
    padding: 20px 11px 14px;
}
.push {
    width: 110px;
    height: 27px;
    border-radius: 6px;
    background: #606467;
}
.primary {
    background: #1663dc;
}
.capture-tip {
    position: absolute;
    left: 953px;
    bottom: 15px;
    padding: 2px 18px;
    border-radius: 4px;
    background: #5d5e5a;
    color: #c9c9c5;
    font-size: 14px;
}
```
